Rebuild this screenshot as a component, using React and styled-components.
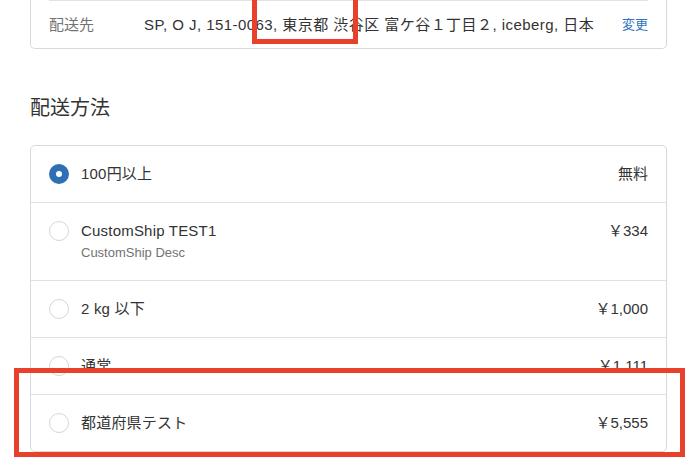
import React from 'react';
import styled, { createGlobalStyle } from 'styled-components';

const GlobalStyle = createGlobalStyle`
  html, body {
    margin: 0;
    padding: 0;
    background: #fff;
  }
  body {
    font-family: "Liberation Sans", "Noto Sans CJK JP", sans-serif;
    color: #333;
  }
`;

const methods = [
  { id: 'over100', name: '100円以上', price: '無料', checked: true },
  { id: 'custom', name: 'CustomShip TEST1', desc: 'CustomShip Desc', price: '￥334' },
  { id: 'under2kg', name: '2 kg 以下', price: '￥1,000' },
  { id: 'normal', name: '通常', price: '￥1,111' },
  { id: 'pref', name: '都道府県テスト', price: '￥5,555' },
];

const App = () => {
  return (
    <>
      <GlobalStyle />
      <Page>
        <InfoCard>
          <InfoRow>
            <InfoLabel>配送先</InfoLabel>
            <InfoValue>SP, O J, 151-0063, 東京都 渋谷区 富ケ谷１丁目２, iceberg, 日本</InfoValue>
            <ChangeLink href="#">変更</ChangeLink>
          </InfoRow>
        </InfoCard>

        <SectionTitle>配送方法</SectionTitle>

        <MethodList>
          {methods.map((m) => (
            <MethodRow key={m.id}>
              <Radio checked={!!m.checked} />
              <MethodText>
                <MethodName>{m.name}</MethodName>
                {m.desc ? <MethodDesc>{m.desc}</MethodDesc> : null}
              </MethodText>
              <Price>{m.price}</Price>
            </MethodRow>
          ))}
        </MethodList>

        {/* red highlight boxes drawn over the screenshot */}
        <Highlight $top={-10} $left={252} $width={106} $height={54} />
        <Highlight $top={368} $left={14} $width={671} $height={89} />
      </Page>
    </>
  );
};

const Page = styled.div`
  position: relative;
  box-sizing: border-box;
  width: 690px;
  height: 460px;
  padding: 0 23px 0 30px;
  overflow: hidden;
`;

const InfoCard = styled.div`
  border: 1px solid #d9d9d9;
  border-top: none;
  border-radius: 0 0 5px 5px;
  padding: 0 18px;
`;

const InfoRow = styled.div`
  display: flex;
  align-items: center;
  border-top: 1px solid #e3e3e3;
  padding: 14px 0 13px;
  line-height: 20px;
  font-size: 15px;
`;

const InfoLabel = styled.div`
  width: 95px;
  flex-shrink: 0;
  color: #737373;
`;

const InfoValue = styled.div`
  flex: 1;
  color: #333;
  white-space: nowrap;
  letter-spacing: 0.45px;
`;

const ChangeLink = styled.a`
  font-size: 13px;
  color: #2f74c0;
  text-decoration: none;
`;

const SectionTitle = styled.h2`
  margin: 46px 0 24px;
  font-size: 20px;
  line-height: 26px;
  font-weight: 400;
  color: #333;
`;

const MethodList = styled.div`
  border: 1px solid #d9d9d9;
  border-radius: 5px;
`;

const MethodRow = styled.div`
  display: flex;
  align-items: flex-start;
  gap: 12px;
  padding: 18px;

  & + & {
    border-top: 1px solid #e1e1e1;
  }
`;

const Radio = styled.span`
  box-sizing: border-box;
  width: 20px;
  height: 20px;
  flex-shrink: 0;
  border-radius: 50%;
  border: ${(p) => (p.checked ? '7px solid #2f6fb5' : '1px solid #d6d6d6')};
  background: #fff;
`;

const MethodText = styled.div`
  display: flex;
  flex-direction: column;
  flex: 1;
`;

const MethodName = styled.div`
  font-size: 15px;
  line-height: 20px;
  color: #333;
  letter-spacing: 0.2px;
`;

const MethodDesc = styled.div`
  margin-top: 3px;
  font-size: 13px;
  line-height: 18px;
  color: #737373;
`;

const Price = styled.div`
  font-size: 15px;
  line-height: 20px;
  color: #333;
`;

const Highlight = styled.div`
  position: absolute;
  top: ${(p) => p.$top}px;
  left: ${(p) => p.$left}px;
  width: ${(p) => p.$width}px;
  height: ${(p) => p.$height}px;
  box-sizing: border-box;
  border: 5px solid #e8402a;
  pointer-events: none;
`;

export default App;
